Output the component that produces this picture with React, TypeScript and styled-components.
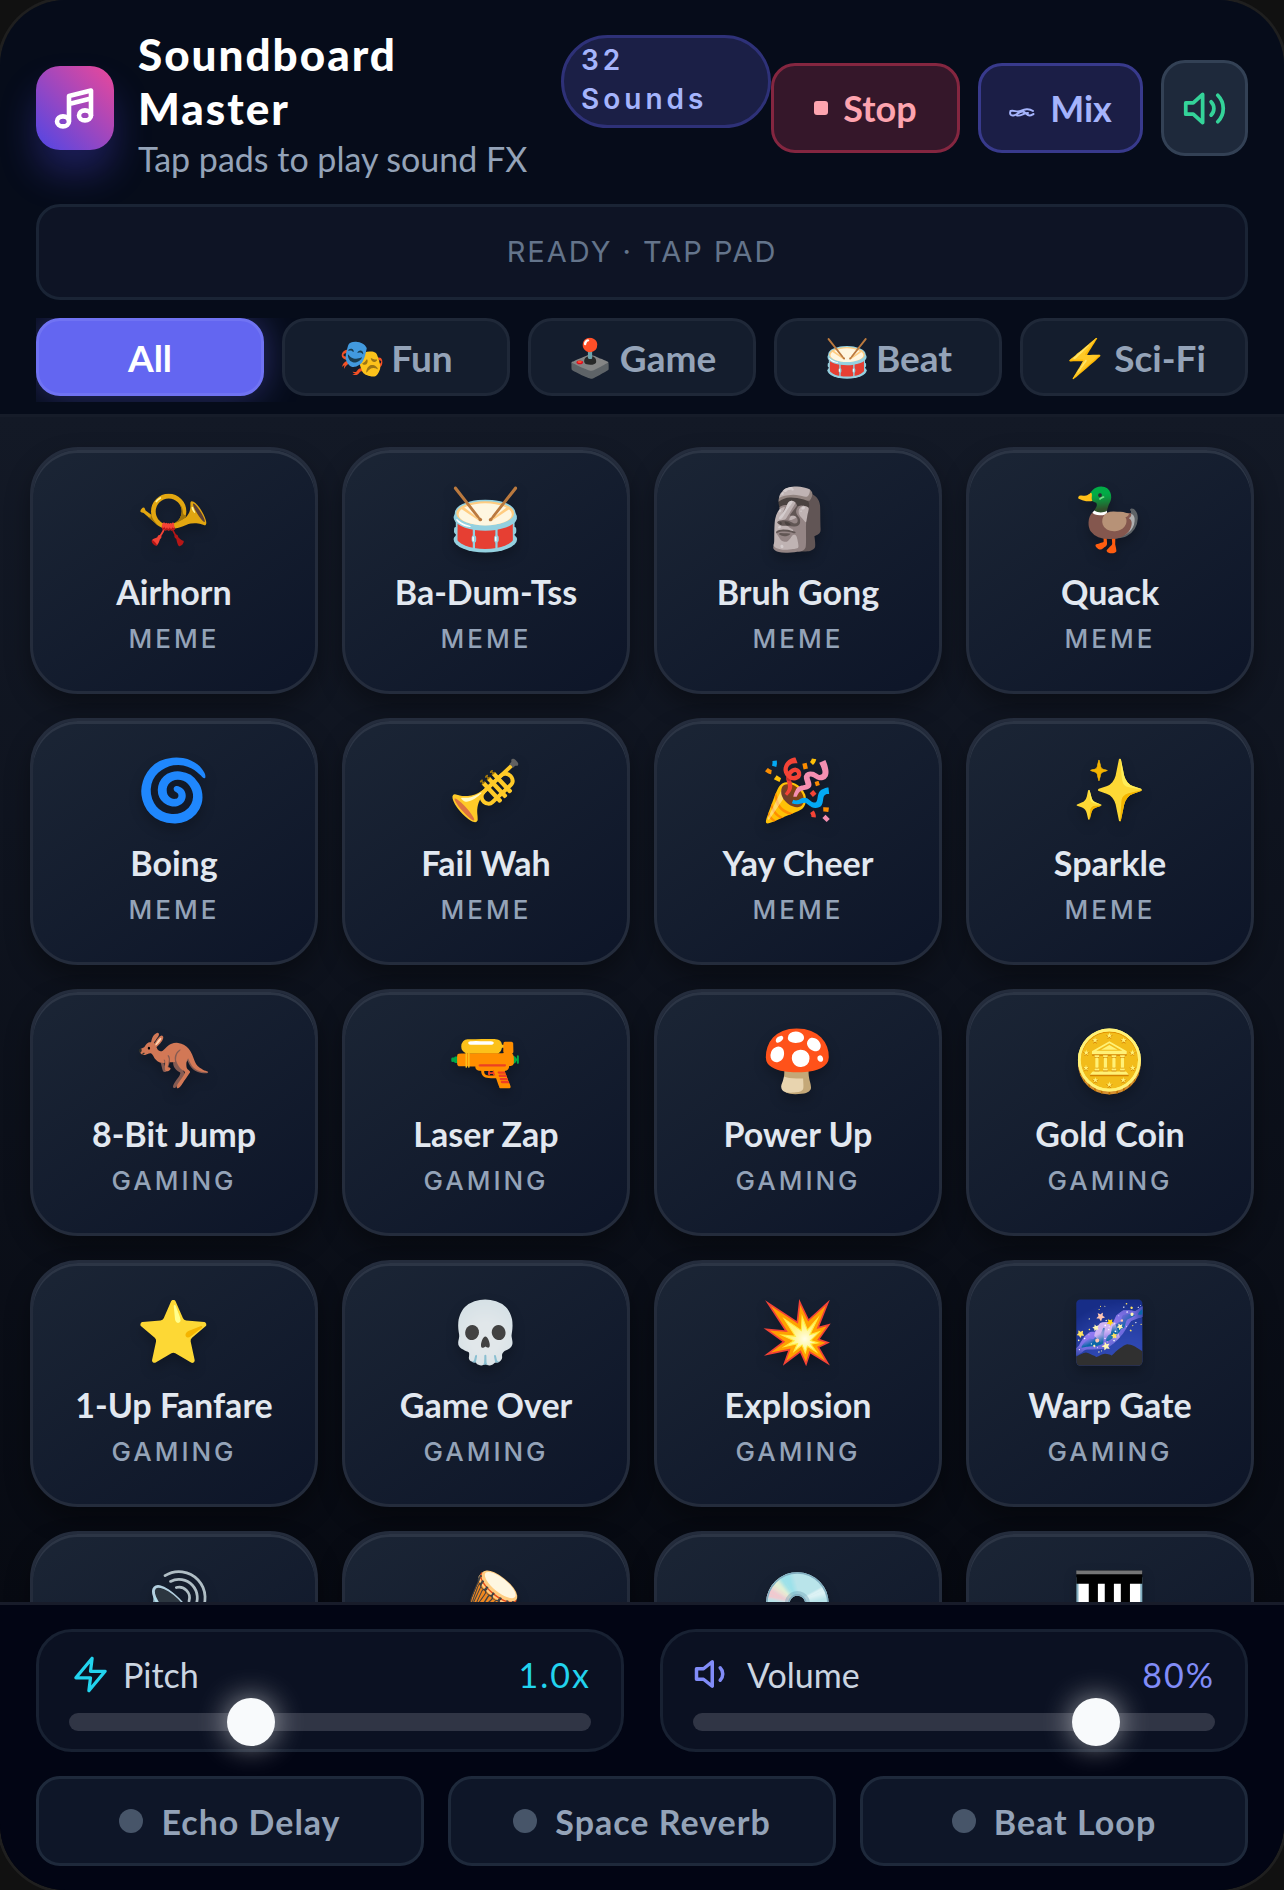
import React, { useState } from "react";
import styled, { createGlobalStyle } from "styled-components";

const SANS = `"Lato", "Noto Color Emoji", sans-serif`;
const TECH = `"Inter", "Noto Color Emoji", sans-serif`;

const Global = createGlobalStyle`
  *, *::before, *::after { box-sizing: border-box; }
  body { margin: 0; background: #111111; font-family: ${SANS}; color: #e2e8f0; overflow: hidden; }
  button { font-family: inherit; cursor: pointer; margin: 0; }
`;

const Shell = styled.div`
  height: 100vh;
  display: flex;
  flex-direction: column;
  border-radius: 66px;
  overflow: hidden;
  background: linear-gradient(180deg, #131926 22%, #070a12 85%);
  box-shadow: 0 0 0 3px #1f1f1f;
`;

const Header = styled.header`
  display: flex;
  flex-direction: column;
  gap: 15px;
  padding: 27px 36px 12px;
  background: #060c1a;
`;

const TopRow = styled.div`
  display: flex;
  align-items: center;
`;

const Logo = styled.div`
  flex: none;
  display: grid;
  place-items: center;
  width: 78px;
  height: 84px;
  margin-right: 24px;
  border-radius: 24px;
  background: linear-gradient(45deg, #4f46e5, #ec4899);
  box-shadow: 0 24px 36px rgba(79, 70, 229, 0.3);
`;

const Brand = styled.div`
  flex: 1;
  min-width: 0;
  padding-bottom: 6px;
`;

const TitleRow = styled.div`
  display: flex;
  align-items: center;
  justify-content: space-between;
  gap: 18px;
`;

const Title = styled.h1`
  margin: 0;
  font-size: 44px;
  line-height: 54px;
  font-weight: 900;
  letter-spacing: 2px;
  color: #ffffff;
`;

const Badge = styled.span`
  flex: none;
  width: 210px;
  padding: 3px 17px 6px;
  border: 3px solid #2e3178;
  border-radius: 48px;
  background: #1b1f46;
  color: #a5b4fc;
  font: 600 28px/39px ${TECH};
  letter-spacing: 4px;
`;

const Line = styled.span`
  display: block;
`;

const Subtitle = styled.p`
  margin: 0;
  font-size: 34px;
  line-height: 48px;
  color: #94a3b8;
`;

const Actions = styled.div`
  flex: none;
  display: flex;
  align-items: center;
  gap: 18px;
`;

const ActionButton = styled.button<{ $tone: "stop" | "mix" }>`
  display: flex;
  align-items: center;
  justify-content: center;
  gap: 15px;
  width: ${(p) => (p.$tone === "stop" ? "189px" : "165px")};
  height: 90px;
  padding: 0;
  border: 3px solid ${(p) => (p.$tone === "stop" ? "#842640" : "#383a8c")};
  border-radius: 24px;
  background: ${(p) => (p.$tone === "stop" ? "#35172a" : "#1b1e46")};
  color: ${(p) => (p.$tone === "stop" ? "#fda4af" : "#a5b4fc")};
  font-size: 36px;
  font-weight: 700;
`;

const SpeakerButton = styled.button`
  display: grid;
  place-items: center;
  width: 87px;
  height: 96px;
  padding: 0;
  border: 3px solid #334155;
  border-radius: 24px;
  background: #1e293b;
  color: #34d399;
`;

const StatusBox = styled.div`
  display: flex;
  align-items: center;
  justify-content: center;
  height: 96px;
  margin-bottom: 3px;
  border: 3px solid #1a2435;
  border-radius: 24px;
  background: #0e1425;
  color: #64748b;
  font: 400 29px/36px ${TECH};
  letter-spacing: 2px;
`;

const Tabs = styled.nav`
  display: grid;
  grid-template-columns: repeat(5, 1fr);
  gap: 18px;
  padding-bottom: 6px;
  overflow: hidden;
`;

const Tab = styled.button<{ $active: boolean }>`
  display: flex;
  align-items: center;
  justify-content: center;
  gap: 6px;
  height: 78px;
  padding: 0;
  border: 3px solid ${(p) => (p.$active ? "#7073f3" : "#1f2838")};
  border-radius: 24px;
  background: ${(p) => (p.$active ? "#6366f1" : "#141d2d")};
  color: ${(p) => (p.$active ? "#ffffff" : "#94a3b8")};
  box-shadow: ${(p) => (p.$active ? "0 0 36px rgba(99, 102, 241, 0.4)" : "none")};
  font-size: 37px;
  font-weight: 700;
`;

const TabEmoji = styled.span`
  font-size: 37px;
`;

const PadArea = styled.main`
  flex: 1;
  min-height: 0;
  overflow: hidden;
  border-top: 3px solid #161c29;
  padding: 30px;
`;

const PadGrid = styled.div`
  display: grid;
  grid-template-columns: repeat(4, 1fr);
  grid-auto-rows: 247px;
  gap: 24px;
`;

const Pad = styled.button`
  display: flex;
  flex-direction: column;
  align-items: center;
  padding: 27px 0 0;
  border: 3px solid #242c3c;
  border-radius: 48px;
  background: linear-gradient(145deg, #1b2535, #0d1528);
  box-shadow: inset 0 3px 0 #2c3545, 0 12px 24px rgba(0, 0, 0, 0.35);
  color: #e2e8f0;
`;

const PadEmoji = styled.span`
  font-size: 60px;
  line-height: 80px;
  filter: drop-shadow(0 6px 6px rgba(0, 0, 0, 0.25));
`;

const PadName = styled.span`
  margin-top: 14px;
  font-size: 34px;
  line-height: 42px;
  font-weight: 700;
`;

const PadKind = styled.span`
  margin-top: 8px;
  font: 500 26px/36px ${TECH};
  letter-spacing: 3px;
  text-transform: uppercase;
  color: #94a3b8;
`;

const Footer = styled.footer`
  display: flex;
  flex-direction: column;
  gap: 24px;
  padding: 24px 36px;
  border-top: 3px solid #181c2a;
  background: #020514;
`;

const Sliders = styled.div`
  display: grid;
  grid-template-columns: 1fr 1fr;
  gap: 36px;
`;

const SliderCard = styled.div`
  height: 123px;
  padding: 21px 30px;
  border: 3px solid #182132;
  border-radius: 36px;
  background: #0b1122;
`;

const SliderHead = styled.div`
  display: flex;
  align-items: center;
  justify-content: space-between;
  height: 42px;
  font-size: 34px;
`;

const SliderLabel = styled.label`
  display: flex;
  align-items: center;
  gap: 12px;
  color: #cbd5e1;
`;

const IconSlot = styled.span<{ $color: string }>`
  display: grid;
  place-items: center;
  width: 42px;
  height: 42px;
  color: ${(p) => p.$color};
`;

const SliderValue = styled.output<{ $color: string }>`
  color: ${(p) => p.$color};
  letter-spacing: 2px;
`;

const Range = styled.input`
  appearance: none;
  display: block;
  width: 100%;
  height: 18px;
  margin: 18px 0 0;
  border-radius: 9px;
  background: #303545;

  &::-webkit-slider-thumb {
    appearance: none;
    width: 48px;
    height: 48px;
    border-radius: 50%;
    background: #f8fafc;
    box-shadow: 0 0 30px rgba(255, 255, 255, 0.6);
  }
`;

const Effects = styled.div`
  display: grid;
  grid-template-columns: repeat(3, 1fr);
  gap: 24px;
`;

const EffectButton = styled.button`
  display: flex;
  align-items: center;
  justify-content: center;
  gap: 18px;
  height: 90px;
  padding: 0;
  border: 3px solid #1e293b;
  border-radius: 24px;
  background: #0e1628;
  color: #94a3b8;
  font-size: 34px;
  font-weight: 700;
  letter-spacing: 1px;
`;

const Dot = styled.span`
  width: 24px;
  height: 24px;
  border-radius: 50%;
  background: #475569;
`;

type IconProps = { size: number; children: React.ReactNode };

const Icon = ({ size, children }: IconProps) => (
  <svg
    width={size}
    height={size}
    viewBox="0 0 24 24"
    fill="none"
    stroke="currentColor"
    strokeWidth="2"
    strokeLinecap="round"
    strokeLinejoin="round"
    aria-hidden="true"
  >
    {children}
  </svg>
);

const TABS = [
  { icon: "", label: "All" },
  { icon: "🎭", label: "Fun" },
  { icon: "🕹️", label: "Game" },
  { icon: "🥁", label: "Beat" },
  { icon: "⚡", label: "Sci-Fi" },
];

const PADS = [
  ["📯", "Airhorn", "Meme"],
  ["🥁", "Ba-Dum-Tss", "Meme"],
  ["🗿", "Bruh Gong", "Meme"],
  ["🦆", "Quack", "Meme"],
  ["🌀", "Boing", "Meme"],
  ["🎺", "Fail Wah", "Meme"],
  ["🎉", "Yay Cheer", "Meme"],
  ["✨", "Sparkle", "Meme"],
  ["🦘", "8-Bit Jump", "Gaming"],
  ["🔫", "Laser Zap", "Gaming"],
  ["🍄", "Power Up", "Gaming"],
  ["🪙", "Gold Coin", "Gaming"],
  ["⭐", "1-Up Fanfare", "Gaming"],
  ["💀", "Game Over", "Gaming"],
  ["💥", "Explosion", "Gaming"],
  ["🌌", "Warp Gate", "Gaming"],
  ["🔊", "", ""],
  ["🪘", "", ""],
  ["💿", "", ""],
  ["🎹", "", ""],
];

export default function App() {
  const [tab, setTab] = useState("All");
  const [pitch, setPitch] = useState(1);
  const [volume, setVolume] = useState(80);

  return (
    <>
      <Global />
      <Shell>
        <Header>
          <TopRow>
            <Logo>
              <svg width="48" height="48" viewBox="0 0 24 24" fill="none" stroke="#ffffff" strokeWidth="2.3" strokeLinecap="round" strokeLinejoin="round" aria-hidden="true">
                <path d="M9 18.500V6l11-2.700v12.500M9 10l11-2.700" />
                <ellipse cx="6" cy="18.700" rx="3" ry="2.500" />
                <ellipse cx="17" cy="15.700" rx="3" ry="2.500" />
              </svg>
            </Logo>
            <Brand>
              <TitleRow>
                <Title>
                  <Line>Soundboard</Line>
                  <Line>Master</Line>
                </Title>
                <Badge>
                  <Line>32</Line>
                  <Line>Sounds</Line>
                </Badge>
              </TitleRow>
              <Subtitle>Tap pads to play sound FX</Subtitle>
            </Brand>
            <Actions>
              <ActionButton $tone="stop">
                <svg width="14" height="14" viewBox="0 0 14 14" aria-hidden="true">
                  <rect width="14" height="14" rx="3" fill="currentColor" />
                </svg>
                Stop
              </ActionButton>
              <ActionButton $tone="mix">
                <svg width="26" height="26" viewBox="0 0 26 26" fill="none" stroke="currentColor" strokeWidth="2" strokeLinecap="round" strokeLinejoin="round" aria-hidden="true">
                  <path d="M1.500 16c4-1 6 1.500 10 0s8-3 12.500 0M1.500 16c-1 3 0 5 3 4.500 4-.5 5-4 9-4 3 0 4 4 7 4 2 0 3-1 4-1.500M8 20.500c4 1 7-3 11-2.500" />
                </svg>
                Mix
              </ActionButton>
              <SpeakerButton aria-label="Mute">
                <Icon size={45}>
                  <path d="M11 4.500 6 9H2v6h4l5 4.500z" />
                  <path d="M15.540 8.460a5 5 0 0 1 0 7.070M19.070 4.930a10 10 0 0 1 0 14.140" />
                </Icon>
              </SpeakerButton>
            </Actions>
          </TopRow>
          <StatusBox>READY · TAP PAD</StatusBox>
          <Tabs>
            {TABS.map((t) => (
              <Tab key={t.label} $active={tab === t.label} onClick={() => setTab(t.label)}>
                {t.icon && <TabEmoji>{t.icon}</TabEmoji>}
                {t.label}
              </Tab>
            ))}
          </Tabs>
        </Header>

        <PadArea>
          <PadGrid>
            {PADS.map(([emoji, name, kind]) => (
              <Pad key={emoji + name}>
                <PadEmoji>{emoji}</PadEmoji>
                <PadName>{name}</PadName>
                <PadKind>{kind}</PadKind>
              </Pad>
            ))}
          </PadGrid>
        </PadArea>

        <Footer>
          <Sliders>
            <SliderCard>
              <SliderHead>
                <SliderLabel htmlFor="pitch">
                  <IconSlot $color="#22d3ee">
                    <Icon size={39}>
                      <path d="M13 2 3 14h9l-1 8 10-12h-9z" />
                    </Icon>
                  </IconSlot>
                  Pitch
                </SliderLabel>
                <SliderValue $color="#22d3ee">{pitch.toFixed(1)}x</SliderValue>
              </SliderHead>
              <Range id="pitch" type="range" min={0.5} max={2} step={0.1} value={pitch} onChange={(e) => setPitch(Number(e.target.value))} />
            </SliderCard>
            <SliderCard>
              <SliderHead>
                <SliderLabel htmlFor="volume">
                  <IconSlot $color="#818cf8">
                    <Icon size={42}>
                      <path d="M11 5 6 9H2v6h4l5 4z" />
                      <path d="M15.540 8.460a5 5 0 0 1 0 7.070" />
                    </Icon>
                  </IconSlot>
                  Volume
                </SliderLabel>
                <SliderValue $color="#818cf8">{volume}%</SliderValue>
              </SliderHead>
              <Range id="volume" type="range" min={0} max={100} value={volume} onChange={(e) => setVolume(Number(e.target.value))} />
            </SliderCard>
          </Sliders>
          <Effects>
            {["Echo Delay", "Space Reverb", "Beat Loop"].map((name) => (
              <EffectButton key={name}>
                <Dot />
                {name}
              </EffectButton>
            ))}
          </Effects>
        </Footer>
      </Shell>
    </>
  );
}
